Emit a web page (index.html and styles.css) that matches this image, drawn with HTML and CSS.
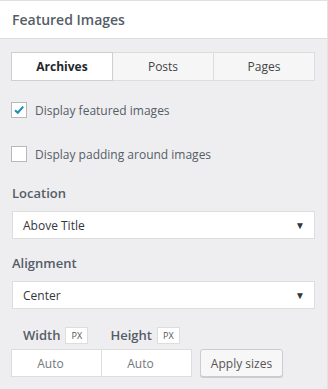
FILE: index.html
```html
<!DOCTYPE html>
<html lang="en">
<head>
    <meta charset="UTF-8">
    <title>Featured Images</title>
    <link rel="stylesheet" href="styles.css">
</head>
<body>
    <div class="panel">
        <div class="panel-header">
            <h2>Featured Images</h2>
        </div>
        <div class="panel-body">
            <div class="tabs">
                <button class="tab active">Archives</button>
                <button class="tab">Posts</button>
                <button class="tab">Pages</button>
            </div>

            <label class="check-row">
                <span class="checkbox checked">
                    <svg viewBox="0 0 16 16" width="16" height="16"><path d="M3.5 8.2 L6.6 11.2 L12.8 4.2" fill="none" stroke="#1e8cbe" stroke-width="2.4"/></svg>
                </span>
                Display featured images
            </label>
            <label class="check-row">
                <span class="checkbox"></span>
                Display padding around images
            </label>

            <div class="field">
                <div class="field-label">Location</div>
                <div class="select">
                    <span>Above Title</span>
                    <span class="caret">&#9660;</span>
                </div>
            </div>

            <div class="field">
                <div class="field-label">Alignment</div>
                <div class="select">
                    <span>Center</span>
                    <span class="caret">&#9660;</span>
                </div>
            </div>

            <div class="sizes">
                <div class="size-labels">
                    <span class="size-label">Width <span class="unit">PX</span></span>
                    <span class="size-label">Height <span class="unit">PX</span></span>
                </div>
                <div class="size-inputs">
                    <input type="text" class="size-input" placeholder="Auto">
                    <input type="text" class="size-input" placeholder="Auto">
                    <button class="apply">Apply sizes</button>
                </div>
            </div>
        </div>
    </div>
</body>
</html>
```

FILE: styles.css
```css
body {
    margin: 0;
    font-family: 'Open Sans', sans-serif;
    background-color: #eeeef0;
}
.panel {
    width: 327px;
    height: 389px;
    border-right: 1px solid #e2e2e4;
    background-color: #eeeef0;
}
.panel-header {
    background-color: #ffffff;
    border-top: 1px solid #e0e0e0;
    border-bottom: 1px solid #dcdcde;
    height: 37px;
    display: flex;
    align-items: center;
    padding-left: 12px;
}
.panel-header h2 {
    margin: 0;
    font-size: 14px;
    font-weight: 600;
    color: #555d66;
}
.panel-body {
    padding: 13px 12px 0 11px;
}
.tabs {
    display: flex;
    width: 304px;
}
.tab {
    flex: 1;
    height: 29px;
    font-family: 'Open Sans', sans-serif;
    font-size: 12px;
    color: #444;
    background-color: #f6f6f6;
    border: 1px solid #dddddd;
    border-left: 0;
    padding: 0;
}
.tab:first-child {
    border-left: 1px solid #d6d6d6;
}
.tab.active {
    background-color: #ffffff;
    font-weight: 700;
    color: #23282d;
    border-color: #cfcfcf;
}
.check-row {
    display: flex;
    align-items: center;
    gap: 8px;
    font-size: 12px;
    color: #555d66;
    margin-top: 21px;
    height: 16px;
}
.check-row + .check-row {
    margin-top: 28px;
}
.checkbox {
    width: 14px;
    height: 14px;
    border: 1px solid #b4b9be;
    background-color: #ffffff;
    display: flex;
    align-items: center;
    justify-content: center;
}
.field {
    margin-top: 22px;
}
.field + .field {
    margin-top: 15px;
}
.field-label {
    font-size: 13px;
    font-weight: 600;
    color: #555d66;
    height: 18px;
    padding-left: 1px;
}
.select {
    margin-top: 9px;
    margin-left: 1px;
    height: 26px;
    border: 1px solid #dddddd;
    background-color: #ffffff;
    display: flex;
    align-items: center;
    justify-content: space-between;
    padding: 0 9px 0 10px;
    box-sizing: content-box;
    width: 282px;
    font-size: 12px;
    color: #32373c;
}
.caret {
    font-size: 10px;
    color: #32373c;
}
.sizes {
    margin-top: 17px;
}
.size-labels {
    display: flex;
    gap: 22px;
    padding-left: 12px;
    height: 18px;
    align-items: center;
}
.size-label {
    font-size: 13px;
    font-weight: 600;
    color: #555d66;
    display: flex;
    align-items: center;
    gap: 5px;
}
.unit {
    font-size: 9px;
    font-weight: 400;
    color: #555;
    background-color: #ffffff;
    border: 1px solid #dddddd;
    width: 23px;
    height: 17px;
    box-sizing: border-box;
    display: flex;
    align-items: center;
    justify-content: center;
}
.size-inputs {
    display: flex;
    align-items: center;
    margin-top: 5px;
}
.size-input {
    width: 91px;
    height: 28px;
    border: 1px solid #dddddd;
    box-sizing: border-box;
    padding: 0 12px 0 0;
    text-align: center;
    font-family: 'Open Sans', sans-serif;
    font-size: 12px;
    background-color: #ffffff;
    margin: 0;
}
.size-input + .size-input {
    border-left: 0;
    width: 90px;
}
.size-input::placeholder {
    color: #72777c;
}
.apply {
    margin-left: 8px;
    width: 83px;
    height: 28px;
    padding: 0;
    font-family: 'Open Sans', sans-serif;
    font-size: 12px;
    color: #555;
    background-color: #f7f7f7;
    border: 1px solid #cccccc;
    border-radius: 3px;
    box-shadow: 0 1px 0 #cccccc;
}
```
